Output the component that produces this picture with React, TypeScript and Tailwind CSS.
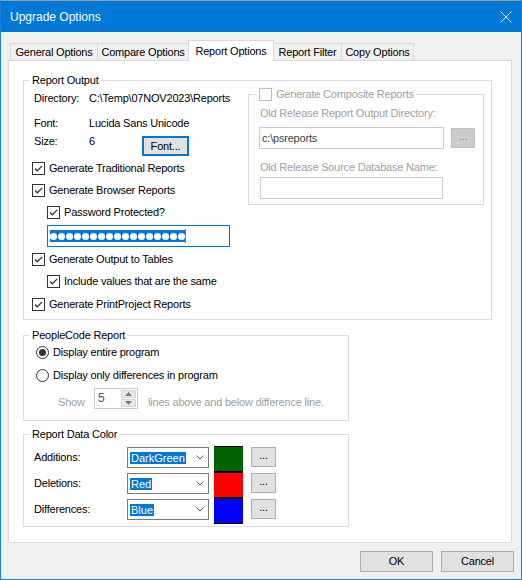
import type { ReactNode } from 'react'

const font = "font-['Liberation_Sans',Arial,sans-serif]"

function CheckMark() {
  return (
    <svg width="11" height="11" viewBox="0 0 11 11" className="block">
      <path d="M2 5.5 L4.3 7.8 L9.2 2.9" fill="none" stroke="#333" strokeWidth="1.3" />
    </svg>
  )
}

function Check({ checked, disabled, label, className = '' }: { checked?: boolean; disabled?: boolean; label: string; className?: string }) {
  return (
    <div className={`flex h-[14px] items-center gap-[4px] ${className}`}>
      <span className={`flex h-[13px] w-[13px] shrink-0 items-center justify-center border bg-white ${disabled ? 'border-[#bcbcbc]' : 'border-[#333]'}`}>
        {checked && <CheckMark />}
      </span>
      <span className={`leading-[14px] whitespace-nowrap ${disabled ? 'text-[#a0a0a0]' : ''}`}>{label}</span>
    </div>
  )
}

function Radio({ checked, label, className = '' }: { checked?: boolean; label: string; className?: string }) {
  return (
    <div className={`flex h-[14px] items-center gap-[4px] ${className}`}>
      <span className="flex h-[13px] w-[13px] items-center justify-center rounded-full border border-[#333] bg-white">
        {checked && <span className="h-[7px] w-[7px] rounded-full bg-[#333]" />}
      </span>
      <span className="leading-[14px] whitespace-nowrap">{label}</span>
    </div>
  )
}

function Group({ title, className = '', legendClass = 'ml-[6px]', children }: { title: ReactNode; className?: string; legendClass?: string; children: ReactNode }) {
  return (
    <fieldset className={`border border-[#dcdcdc] ${className}`}>
      <legend className={`px-[2px] leading-[14px] ${legendClass}`}>{title}</legend>
      {children}
    </fieldset>
  )
}

function ColorRow({ label, name, color }: { label: string; name: string; color: string }) {
  return (
    <div className="flex h-[26px] items-start">
      <span className="mt-[4px] w-[93px] leading-[14px]">{label}</span>
      <div className="mt-[1px] flex h-[21px] w-[82px] items-center border border-[#7a7a7a] bg-white pl-[2px] pr-[4px]">
        <span className="bg-[#0078d7] px-px leading-[12px] tracking-normal text-white">{name}</span>
        <svg width="8" height="5" viewBox="0 0 8 5" className="ml-auto">
          <path d="M0.5 0.5 L4 4 L7.5 0.5" fill="none" stroke="#555" strokeWidth="1" />
        </svg>
      </div>
      <div className={`ml-[5px] h-[26px] w-[29px] border-y border-black ${color}`} />
      <button className="mt-[1px] ml-[8px] flex h-[20px] w-[25px] items-center justify-center border border-[#adadad] bg-[#e1e1e1] pb-[3px]">...</button>
    </div>
  )
}

export default function App() {
  const dots = Array.from({ length: 17 })

  return (
    <div className={`${font} flex h-[580px] w-[522px] flex-col border border-[#1883d7] border-t-[#9a9a9a] bg-[#f0f0f0] text-[11px] tracking-[-0.2px] text-black`}>
      {/* Title bar */}
      <div className="flex h-[31px] shrink-0 items-center bg-[#0078d7] pl-[9px] pr-[9px] text-[12px] tracking-normal text-white">
        <span>Upgrade Options</span>
        <svg width="12" height="12" viewBox="0 0 12 12" className="ml-auto">
          <path d="M0.5 0.5 L11.5 11.5 M11.5 0.5 L0.5 11.5" stroke="#fff" strokeWidth="1" />
        </svg>
      </div>

      {/* Tabs */}
      <div className="mt-[8px] ml-[9px] flex items-end">
        <div className="flex h-[17px] w-[87px] items-center justify-center border-t border-l border-[#d9d9d9] bg-[#f0f0f0]">General Options</div>
        <div className="flex h-[17px] w-[91px] items-center justify-center border-t border-l border-[#d9d9d9] bg-[#f0f0f0]">Compare Options</div>
        <div className="relative z-10 -mb-px flex h-[21px] w-[86px] items-center justify-center border-x border-t border-[#d9d9d9] bg-white">Report Options</div>
        <div className="flex h-[17px] w-[67px] items-center justify-center border-t border-[#d9d9d9] bg-[#f0f0f0]">Report Filter</div>
        <div className="flex h-[17px] w-[73px] items-center justify-center border-x border-t border-[#d9d9d9] bg-[#f0f0f0]">Copy Options</div>
      </div>

      {/* Panel */}
      <div className="ml-[7px] h-[483px] w-[504px] border border-[#d9d9d9] bg-white pt-[12px] pl-[14px]">
        <Group title="Report Output" className="w-[469px]">
          <div className="flex items-start pl-[9px] pr-[7px] pb-[8px]">
            <div className="w-[215px] pt-[4px]">
              <div className="ml-px flex h-[14px] items-center">
                <span className="w-[55px]">Directory:</span>
                <span className="whitespace-nowrap">C:\Temp\07NOV2023\Reports</span>
              </div>
              <div className="mt-[11px] ml-px flex h-[14px] items-center">
                <span className="w-[55px]">Font:</span>
                <span>Lucida Sans Unicode</span>
              </div>
              <div className="mt-[4px] ml-px flex items-start">
                <span className="w-[55px] leading-[14px]">Size:</span>
                <span className="w-[53px] leading-[14px]">6</span>
                <button className="mt-[2px] flex h-[20px] w-[47px] items-center justify-center border-2 border-[#0078d7] bg-[#e1e1e1]">Font...</button>
              </div>
              <Check checked label="Generate Traditional Reports" className="mt-[5px] -ml-px" />
              <Check checked label="Generate Browser Reports" className="mt-[8px] -ml-px" />
              <Check checked label="Password Protected?" className="mt-[8px] ml-[14px]" />
              <div className="mt-[6px] ml-[14px] flex h-[22px] w-[183px] items-center border border-[#0078d7] bg-white pl-[2px]">
                <div className="flex h-[12px] items-center gap-px bg-[#0078d7]">
                  {dots.map((_, i) => (
                    <span key={i} className="h-[7px] w-[7px] rounded-full bg-white" />
                  ))}
                </div>
                <span className="h-[14px] w-px bg-[#d2691e]" />
              </div>
              <Check checked label="Generate Output to Tables" className="mt-[5px] -ml-px" />
              <Check checked label="Include values that are the same" className="mt-[8px] ml-[14px]" />
              <Check checked label="Generate PrintProject Reports" className="mt-[9px] -ml-px" />
            </div>

            <Group
              title={<Check disabled label="Generate Composite Reports" />}
              legendClass="ml-[8px]"
              className="w-[236px]"
            >
              <div className="pl-[11px] pt-[5px] pb-[5px] text-[#a0a0a0]">
                <div className="leading-[14px] whitespace-nowrap">Old Release Report Output Directory:</div>
                <div className="mt-[7px] flex items-center gap-[7px]">
                  <div className="-ml-px flex h-[22px] w-[185px] items-center border border-[#cccccc] bg-white px-[2px] text-[#444]">c:\psreports</div>
                  <div className="flex h-[20px] w-[24px] items-center justify-center border border-[#bfbfbf] bg-[#cccccc] pb-[3px] text-[#8a8a8a]">...</div>
                </div>
                <div className="mt-[11px] leading-[14px] whitespace-nowrap">Old Release Source Database Name:</div>
                <div className="mt-[3px] h-[22px] w-[183px] border border-[#cccccc] bg-white" />
              </div>
            </Group>
          </div>
        </Group>

        <Group title="PeopleCode Report" className="mt-[8px] w-[326px]">
          <div className="pl-[12px] pt-[3px] pb-[11px]">
            <Radio checked label="Display entire program" />
            <Radio label="Display only differences in program" className="mt-[9px]" />
            <div className="mt-[6px] ml-[22px] flex items-start text-[#a0a0a0]">
              <span className="mt-[7px] w-[36px] leading-[14px]">Show</span>
              <div className="flex h-[21px] w-[44px] border border-[#cccccc] bg-white">
                <span className="flex-1 pl-[3px] pt-[1px] text-[12px] leading-[16px] text-[#555]">5</span>
                <div className="flex w-[17px] flex-col gap-px p-px">
                  <span className="flex flex-1 items-center justify-center border border-[#d4d4d4] bg-[#e8e8e8]">
                    <svg width="7" height="4" viewBox="0 0 7 4"><path d="M0 4 L3.5 0 L7 4 Z" fill="#7a7a7a" /></svg>
                  </span>
                  <span className="flex flex-1 items-center justify-center border border-[#d4d4d4] bg-[#e8e8e8]">
                    <svg width="7" height="4" viewBox="0 0 7 4"><path d="M0 0 L3.5 4 L7 0 Z" fill="#7a7a7a" /></svg>
                  </span>
                </div>
              </div>
              <span className="mt-[7px] ml-[10px] leading-[14px] whitespace-nowrap">lines above and below difference line.</span>
            </div>
          </div>
        </Group>

        <Group title="Report Data Color" className="mt-[6px] w-[326px]">
          <div className="pl-[10px] pt-[5px] pb-[2px]">
            <ColorRow label="Additions:" name="DarkGreen" color="bg-[#006400]" />
            <ColorRow label="Deletions:" name="Red" color="bg-[#ff0000]" />
            <ColorRow label="Differences:" name="Blue" color="bg-[#0000ff]" />
          </div>
        </Group>
      </div>

      {/* Footer buttons */}
      <div className="mt-[8px] flex justify-end gap-[8px] pr-[7px]">
        <button className="flex h-[21px] w-[73px] items-center justify-center border border-[#adadad] bg-[#e1e1e1]">OK</button>
        <button className="flex h-[21px] w-[73px] items-center justify-center border border-[#adadad] bg-[#e1e1e1]">Cancel</button>
      </div>
    </div>
  )
}
